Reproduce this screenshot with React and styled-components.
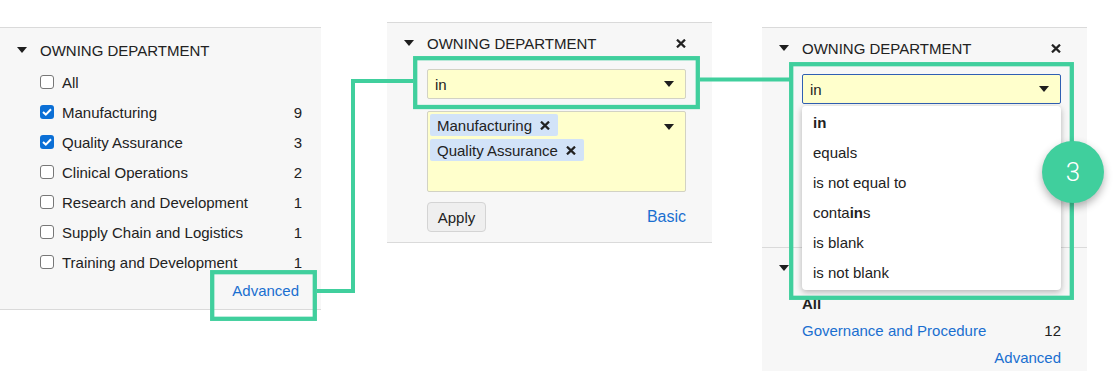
import React from 'react';
import styled, { createGlobalStyle } from 'styled-components';

const GREEN = '#40cf9d';
const LINK = '#1a6fd0';

const GlobalStyle = createGlobalStyle`
  html, body {
    margin: 0;
    padding: 0;
    background: #fff;
  }
  body {
    font-family: 'Liberation Sans', Arial, sans-serif;
    color: #222;
  }
`;

const Canvas = styled.div`
  position: relative;
  width: 1120px;
  height: 371px;
  overflow: hidden;
  display: flex;
  align-items: flex-start;
`;

const Panel = styled.div`
  flex-shrink: 0;
  width: ${(p) => p.$width}px;
  margin-left: ${(p) => p.$left}px;
  margin-top: ${(p) => p.$top}px;
  background: #f7f7f7;
`;

const Section = styled.div`
  border-top: ${(p) => (p.$noTop ? 'none' : '1px solid #dadada')};
  border-bottom: ${(p) => (p.$noBottom ? 'none' : '1px solid #dadada')};
  padding: ${(p) => p.$pad};
`;

const Header = styled.div`
  display: flex;
  align-items: center;
  height: 20px;
  font-size: 15px;
  text-transform: uppercase;
  color: #222;
`;

const Caret = styled.span`
  flex-shrink: 0;
  width: 0;
  height: 0;
  border-left: ${(p) => p.$w / 2}px solid transparent;
  border-right: ${(p) => p.$w / 2}px solid transparent;
  border-top: 6px solid #1e1e1e;
  margin-right: ${(p) => p.$gap || 0}px;
  margin-top: ${(p) => p.$top || 0}px;
`;

const Title = styled.span`
  flex: 1;
`;

const CrossSvg = styled.svg`
  flex-shrink: 0;
  display: block;
`;

const Cross = () => (
  <CrossSvg width="10" height="9" viewBox="0 0 10 9">
    <path d="M1 0.6 L9 8.4 M9 0.6 L1 8.4" stroke="#222" strokeWidth="2.2" />
  </CrossSvg>
);

const List = styled.div`
  margin-top: ${(p) => p.$top}px;
  padding-left: ${(p) => p.$indent}px;
`;

const Row = styled.div`
  display: flex;
  align-items: center;
  height: ${(p) => p.$h}px;
  font-size: 15px;
`;

const Box = styled.span`
  flex-shrink: 0;
  box-sizing: border-box;
  width: 14px;
  height: 14px;
  margin-right: 8px;
  border-radius: 3px;
  border: ${(p) => (p.$checked ? 'none' : '1.5px solid #777')};
  background: ${(p) => (p.$checked ? '#0b6fd6' : '#fff')};
  display: flex;
  align-items: center;
  justify-content: center;
`;

const Label = styled.span`
  flex: 1;
  color: ${(p) => (p.$link ? LINK : '#222')};
  font-weight: ${(p) => (p.$bold ? 700 : 400)};
`;

const Count = styled.span`
  color: #222;
`;

const LinkRow = styled.div`
  display: flex;
  justify-content: flex-end;
  align-items: center;
  height: ${(p) => p.$h}px;
  margin-top: ${(p) => p.$top || 0}px;
  margin-right: ${(p) => p.$right || 0}px;
  font-size: 15px;
`;

const Link = styled.span`
  color: ${LINK};
`;

const Body = styled.div`
  padding-left: 23px;
`;

const SelectWrap = styled.div`
  position: relative;
  margin-top: 16px;
`;

const Select = styled.div`
  box-sizing: border-box;
  height: 30px;
  display: flex;
  align-items: center;
  justify-content: space-between;
  padding: 0 11px 0 7px;
  background: #ffffcc;
  border: 1px solid ${(p) => (p.$focused ? '#2f5fb3' : '#d2d2c4')};
  border-radius: 2px;
  font-size: 15px;
  color: #222;
`;

const Menu = styled.div`
  position: absolute;
  z-index: 3;
  top: calc(100% + 2px);
  left: 0;
  right: 0;
  padding: 2px 0;
  background: #fff;
  border-radius: 4px;
  box-shadow: 0 2px 6px rgba(0, 0, 0, 0.28);
`;

const MenuItem = styled.div`
  height: 30px;
  line-height: 30px;
  padding-left: 11px;
  font-size: 15px;
  color: #222;
  font-weight: ${(p) => (p.$active ? 700 : 400)};
`;

const ChipBox = styled.div`
  box-sizing: border-box;
  height: 81px;
  margin-top: 12px;
  display: flex;
  align-items: flex-start;
  padding: 2px 11px 0 2px;
  background: #ffffcc;
  border: 1px solid #d2d2c4;
  border-radius: 2px;
`;

const Chips = styled.div`
  flex: 1;
  display: flex;
  flex-wrap: wrap;
  gap: 3px;
`;

const Chip = styled.span`
  display: inline-flex;
  align-items: center;
  gap: 8px;
  height: 22px;
  padding: 0 8px 0 7px;
  background: #d2e3f8;
  border-radius: 2px;
  font-size: 15px;
  color: #222;
`;

const Footer = styled.div`
  display: flex;
  align-items: center;
  justify-content: space-between;
  margin-top: 10px;
`;

const Spacer = styled.div`
  height: ${(p) => p.$h}px;
`;

const Button = styled.button`
  box-sizing: border-box;
  width: 59px;
  height: 30px;
  padding: 0;
  background: #efefef;
  border: 1px solid #d4d4d4;
  border-radius: 4px;
  font-family: 'Liberation Sans', Arial, sans-serif;
  font-size: 15px;
  color: #222;
`;

const Overlay = styled.svg`
  position: absolute;
  left: 0;
  top: 0;
  z-index: 5;
  pointer-events: none;
`;

const Badge = styled.div`
  position: absolute;
  z-index: 6;
  left: 1042px;
  top: 141px;
  width: 62px;
  height: 62px;
  border-radius: 50%;
  background: ${GREEN};
  box-shadow: 0 4px 8px rgba(0, 0, 0, 0.3);
  display: flex;
  align-items: center;
  justify-content: center;
  color: #fff;
  font-family: Roboto, 'Liberation Sans', sans-serif;
  font-weight: 300;
  font-size: 26px;
`;

const Check = () => (
  <svg width="10" height="8" viewBox="0 0 10 8">
    <path d="M1 4 L3.8 6.6 L9 1.2" fill="none" stroke="#fff" strokeWidth="2" />
  </svg>
);

const departments = [
  { name: 'All' },
  { name: 'Manufacturing', count: 9, checked: true },
  { name: 'Quality Assurance', count: 3, checked: true },
  { name: 'Clinical Operations', count: 2 },
  { name: 'Research and Development', count: 1 },
  { name: 'Supply Chain and Logistics', count: 1 },
  { name: 'Training and Development', count: 1 },
];

const operators = [
  { label: 'in', active: true },
  { label: 'equals' },
  { label: 'is not equal to' },
  { label: <>conta<b>in</b>s</> },
  { label: 'is blank' },
  { label: 'is not blank' },
];

const AdvancedFilter = ({ open }) => (
  <>
    <Header>
      <Caret $w={10} $gap={13} />
      <Title>Owning Department</Title>
      <Cross />
    </Header>
    <Body>
      <SelectWrap>
        <Select $focused={open}>
          <span>in</span>
          <Caret $w={11} />
        </Select>
        {open && (
          <Menu>
            {operators.map((op, i) => (
              <MenuItem key={i} $active={op.active}>{op.label}</MenuItem>
            ))}
          </Menu>
        )}
      </SelectWrap>
      {open ? (
        /* chips and footer sit under the open menu */
        <Spacer $h={133} />
      ) : (
        <>
          <ChipBox>
            <Chips>
              <Chip>Manufacturing <Cross /></Chip>
              <Chip>Quality Assurance <Cross /></Chip>
            </Chips>
            <Caret $w={11} $top={10} />
          </ChipBox>
          <Footer>
            <Button>Apply</Button>
            <Link>Basic</Link>
          </Footer>
        </>
      )}
    </Body>
  </>
);

const App = () => (
  <>
    <GlobalStyle />
    <Canvas>
      <Panel $width={321} $left={0} $top={27}>
        <Section $pad="12px 19px 9px 17px">
          <Header>
            <Caret $w={10} $gap={13} />
            <Title>Owning Department</Title>
          </Header>
          <List $top={7} $indent={23}>
            {departments.map((d) => (
              <Row key={d.name} $h={30}>
                <Box $checked={d.checked}>{d.checked && <Check />}</Box>
                <Label>{d.name}</Label>
                {d.count && <Count>{d.count}</Count>}
              </Row>
            ))}
          </List>
          <LinkRow $h={20} $top={3} $right={3}>
            <Link>Advanced</Link>
          </LinkRow>
        </Section>
      </Panel>

      <Panel $width={325} $left={66} $top={22}>
        <Section $pad="10px 26px 10px 17px">
          <AdvancedFilter />
        </Section>
      </Panel>

      <Panel $width={325} $left={50} $top={27}>
        <Section $pad="10px 26px 10px 17px">
          <AdvancedFilter open />
        </Section>
        <Section $noTop $noBottom $pad="10px 26px 0 17px">
          <Header>
            <Caret $w={10} $gap={13} />
            <Title />
          </Header>
          <List $top={12} $indent={23}>
            <Row $h={27}>
              <Label $bold>All</Label>
            </Row>
            <Row $h={27}>
              <Label $link>Governance and Procedure</Label>
              <Count>12</Count>
            </Row>
          </List>
          <LinkRow $h={27}>
            <Link>Advanced</Link>
          </LinkRow>
        </Section>
      </Panel>

      <Overlay width="1120" height="371" viewBox="0 0 1120 371">
        <g fill="none" stroke={GREEN} strokeWidth="4.3">
          <rect x="212.2" y="272.2" width="102.6" height="46.6" />
          <rect x="415.2" y="58.2" width="282.6" height="48.8" />
          <rect x="791.2" y="64.2" width="280.6" height="233.6" />
          <polyline points="317,291 353,291 353,81 413,81" strokeWidth="4" />
          <line x1="700" y1="79.5" x2="790" y2="79.5" strokeWidth="4" />
        </g>
      </Overlay>
      <Badge>3</Badge>
    </Canvas>
  </>
);

export default App;
